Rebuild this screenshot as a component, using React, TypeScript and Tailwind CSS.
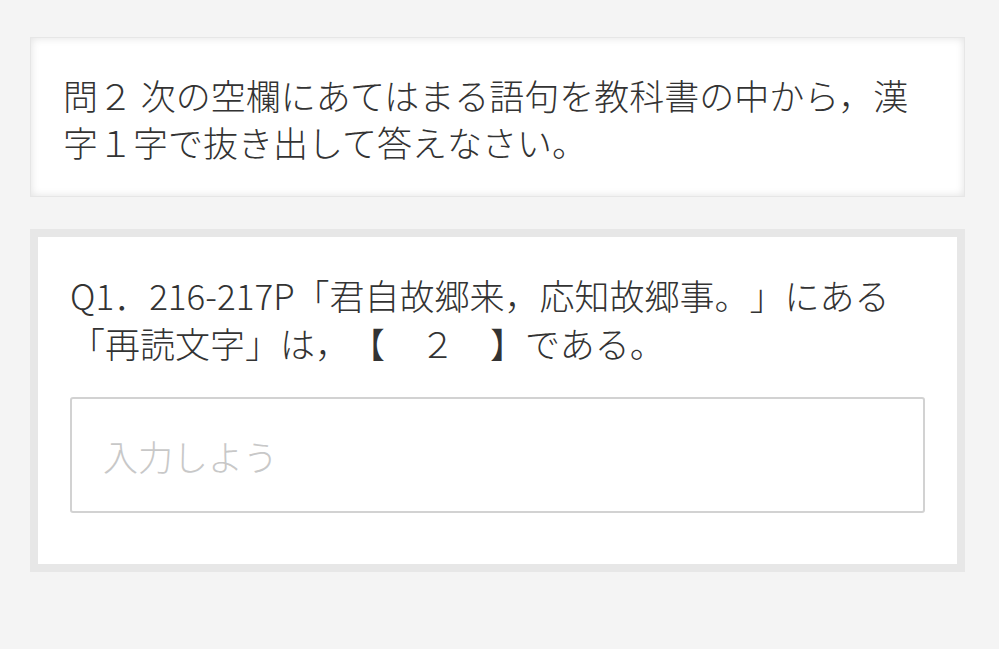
export default function App() {
  return (
    <main
      className="min-h-screen bg-[#f4f4f4] pl-[30px] pr-[34px] pt-[37px] pb-10 text-[35px] font-light text-[#333] [text-spacing-trim:space-all]"
      style={{ fontFamily: '"Noto Sans CJK JP", "Noto Sans", sans-serif' }}
    >
      <section className="border border-[#e6e6e6] bg-white px-[32px] pt-[33px] pb-[31px] leading-[47px] shadow-[inset_0_0_9px_rgba(0,0,0,0.12)]">
        <p>問２ 次の空欄にあてはまる語句を教科書の中から，漢字１字で抜き出して答えなさい。</p>
      </section>

      <section className="mt-[32px] border-[8px] border-[#e7e7e7] bg-white px-[32px] pt-[34px] pb-[51px]">
        <p className="leading-[48px]">
          Q1．216-217P「君自故郷来，応知故郷事。」にある「再読文字」は，【　２　】である。
        </p>
        <input
          type="text"
          placeholder="入力しよう"
          className="mt-[30px] block h-[116px] w-full rounded-[3px] border-2 border-[#d2d2d2] bg-white pl-[31px] text-[35px] font-light text-[#333] outline-none placeholder:text-[#c8c8c8]"
        />
      </section>
    </main>
  );
}
